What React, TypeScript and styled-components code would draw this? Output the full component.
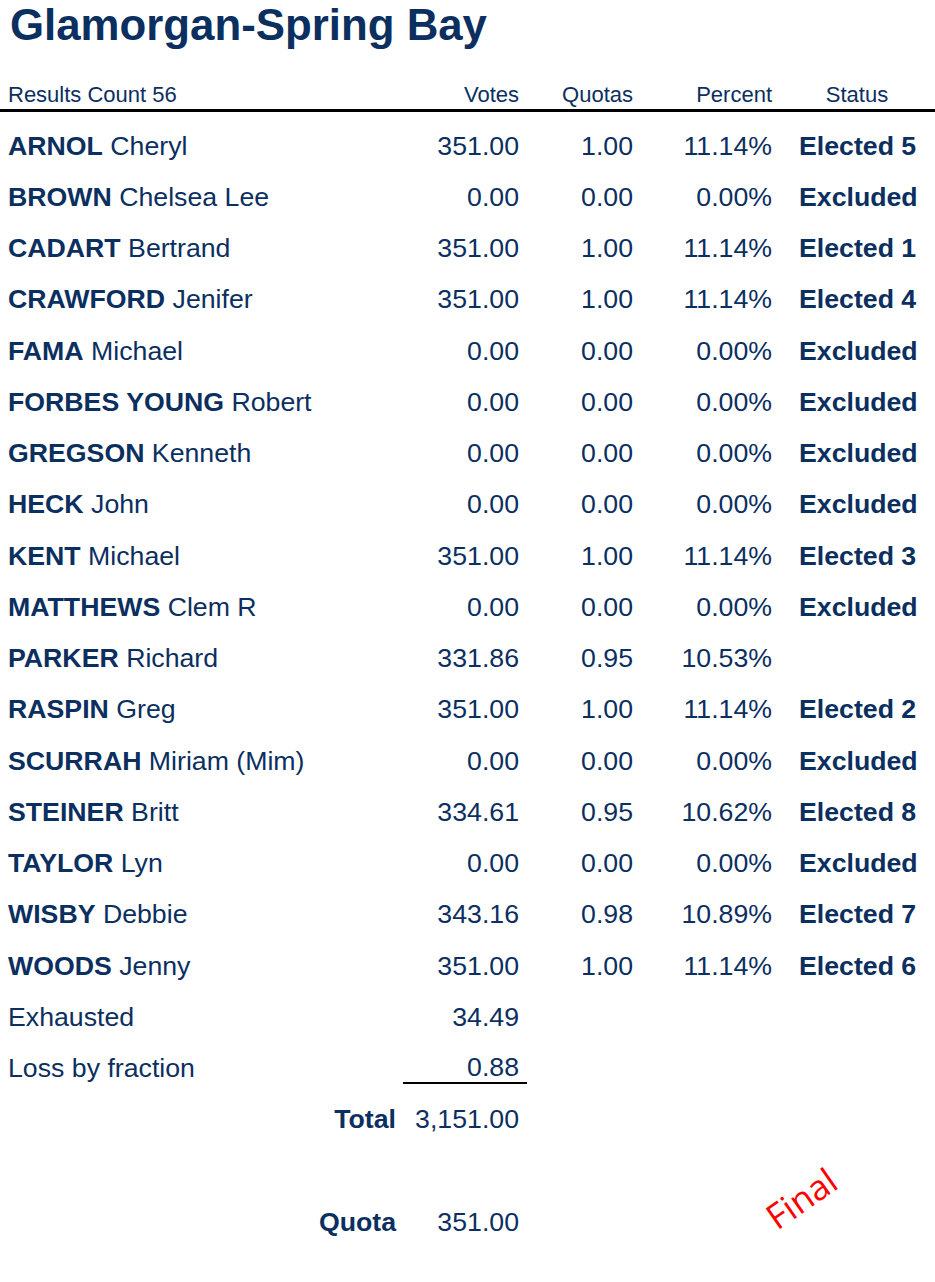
import React from "react";
import styled, { createGlobalStyle } from "styled-components";

const Global = createGlobalStyle`
  html, body { margin: 0; padding: 0; background: #fff; }
  body { font-family: "Liberation Sans", Arial, sans-serif; color: #0b2f5f; }
`;

const Page = styled.div`
  position: relative;
  width: 935px;
  min-height: 1282px;
  box-sizing: border-box;
`;

const Title = styled.h1`
  margin: 0;
  padding-left: 10px;
  font-size: 43.8px;
  line-height: 50px;
  font-weight: 700;
  color: #0b2f5f;
`;

const Grid = styled.div`
  display: grid;
  grid-template-columns: 411px 100px 114px 139px 1fr;
  padding-left: 8px;
  align-items: center;
`;

const HeaderRow = styled(Grid)`
  margin-top: 32px;
  font-size: 22px;
  line-height: 26px;
  padding-bottom: 1px;
  border-bottom: 3px solid #000;
`;

const HeadCell = styled.div<{ $align?: string }>`
  text-align: ${(p) => p.$align || "right"};
  padding-left: ${(p) => (p.$align === "center" ? "27px" : "0")};
  padding-right: ${(p) => (p.$align === "center" ? "20px" : "0")};
`;

const Body = styled.div`
  padding-top: 8px;
`;

const Row = styled(Grid)`
  height: 51.25px;
  font-size: 26.7px;
  line-height: 30px;
`;

const Name = styled.div`
  white-space: nowrap;
  b { font-weight: 700; }
`;

const Label = styled.div`
  text-align: right;
  font-weight: 700;
  padding-right: 23px;
`;

const Num = styled.div`
  display: flex;
  justify-content: flex-end;
  white-space: nowrap;
`;

const Status = styled.div`
  padding-left: 27px;
  font-weight: 700;
  white-space: nowrap;
`;

const Underlined = styled.span`
  display: block;
  flex: 1;
  text-align: right;
  margin: 0 -8px 0 -16px;
  padding-right: 8px;
  border-bottom: 2px solid #000;
`;

const Spacer = styled.div`
  height: 51.25px;
`;

const Stamp = styled.div`
  position: absolute;
  left: 801px;
  top: 1198px;
  transform: translate(-50%, -50%) rotate(-35deg);
  color: #ff0000;
  font-family: "Open Sans", sans-serif;
  font-weight: 400;
  font-size: 35px;
  line-height: 1;
  white-space: nowrap;
`;

type Cand = { last: string; first: string; votes: string; quotas: string; pct: string; status: string };

const candidates: Cand[] = [
  { last: "ARNOL", first: "Cheryl", votes: "351.00", quotas: "1.00", pct: "11.14%", status: "Elected 5" },
  { last: "BROWN", first: "Chelsea Lee", votes: "0.00", quotas: "0.00", pct: "0.00%", status: "Excluded" },
  { last: "CADART", first: "Bertrand", votes: "351.00", quotas: "1.00", pct: "11.14%", status: "Elected 1" },
  { last: "CRAWFORD", first: "Jenifer", votes: "351.00", quotas: "1.00", pct: "11.14%", status: "Elected 4" },
  { last: "FAMA", first: "Michael", votes: "0.00", quotas: "0.00", pct: "0.00%", status: "Excluded" },
  { last: "FORBES YOUNG", first: "Robert", votes: "0.00", quotas: "0.00", pct: "0.00%", status: "Excluded" },
  { last: "GREGSON", first: "Kenneth", votes: "0.00", quotas: "0.00", pct: "0.00%", status: "Excluded" },
  { last: "HECK", first: "John", votes: "0.00", quotas: "0.00", pct: "0.00%", status: "Excluded" },
  { last: "KENT", first: "Michael", votes: "351.00", quotas: "1.00", pct: "11.14%", status: "Elected 3" },
  { last: "MATTHEWS", first: "Clem R", votes: "0.00", quotas: "0.00", pct: "0.00%", status: "Excluded" },
  { last: "PARKER", first: "Richard", votes: "331.86", quotas: "0.95", pct: "10.53%", status: "" },
  { last: "RASPIN", first: "Greg", votes: "351.00", quotas: "1.00", pct: "11.14%", status: "Elected 2" },
  { last: "SCURRAH", first: "Miriam (Mim)", votes: "0.00", quotas: "0.00", pct: "0.00%", status: "Excluded" },
  { last: "STEINER", first: "Britt", votes: "334.61", quotas: "0.95", pct: "10.62%", status: "Elected 8" },
  { last: "TAYLOR", first: "Lyn", votes: "0.00", quotas: "0.00", pct: "0.00%", status: "Excluded" },
  { last: "WISBY", first: "Debbie", votes: "343.16", quotas: "0.98", pct: "10.89%", status: "Elected 7" },
  { last: "WOODS", first: "Jenny", votes: "351.00", quotas: "1.00", pct: "11.14%", status: "Elected 6" },
];

export default function App() {
  return (
    <Page>
      <Global />
      <Title>Glamorgan-Spring Bay</Title>
      <HeaderRow>
        <HeadCell $align="left">Results Count 56</HeadCell>
        <HeadCell>Votes</HeadCell>
        <HeadCell>Quotas</HeadCell>
        <HeadCell>Percent</HeadCell>
        <HeadCell $align="center">Status</HeadCell>
      </HeaderRow>
      <Body>
        {candidates.map((c) => (
          <Row key={c.last}>
            <Name>
              <b>{c.last}</b> {c.first}
            </Name>
            <Num>{c.votes}</Num>
            <Num>{c.quotas}</Num>
            <Num>{c.pct}</Num>
            <Status>{c.status}</Status>
          </Row>
        ))}
        <Row>
          <Name>Exhausted</Name>
          <Num>34.49</Num>
        </Row>
        <Row>
          <Name>Loss by fraction</Name>
          <Num>
            <Underlined>0.88</Underlined>
          </Num>
        </Row>
        <Row>
          <Label>Total</Label>
          <Num>3,151.00</Num>
        </Row>
        <Spacer />
        <Row>
          <Label>Quota</Label>
          <Num>351.00</Num>
        </Row>
      </Body>
      <Stamp>Final</Stamp>
    </Page>
  );
}
